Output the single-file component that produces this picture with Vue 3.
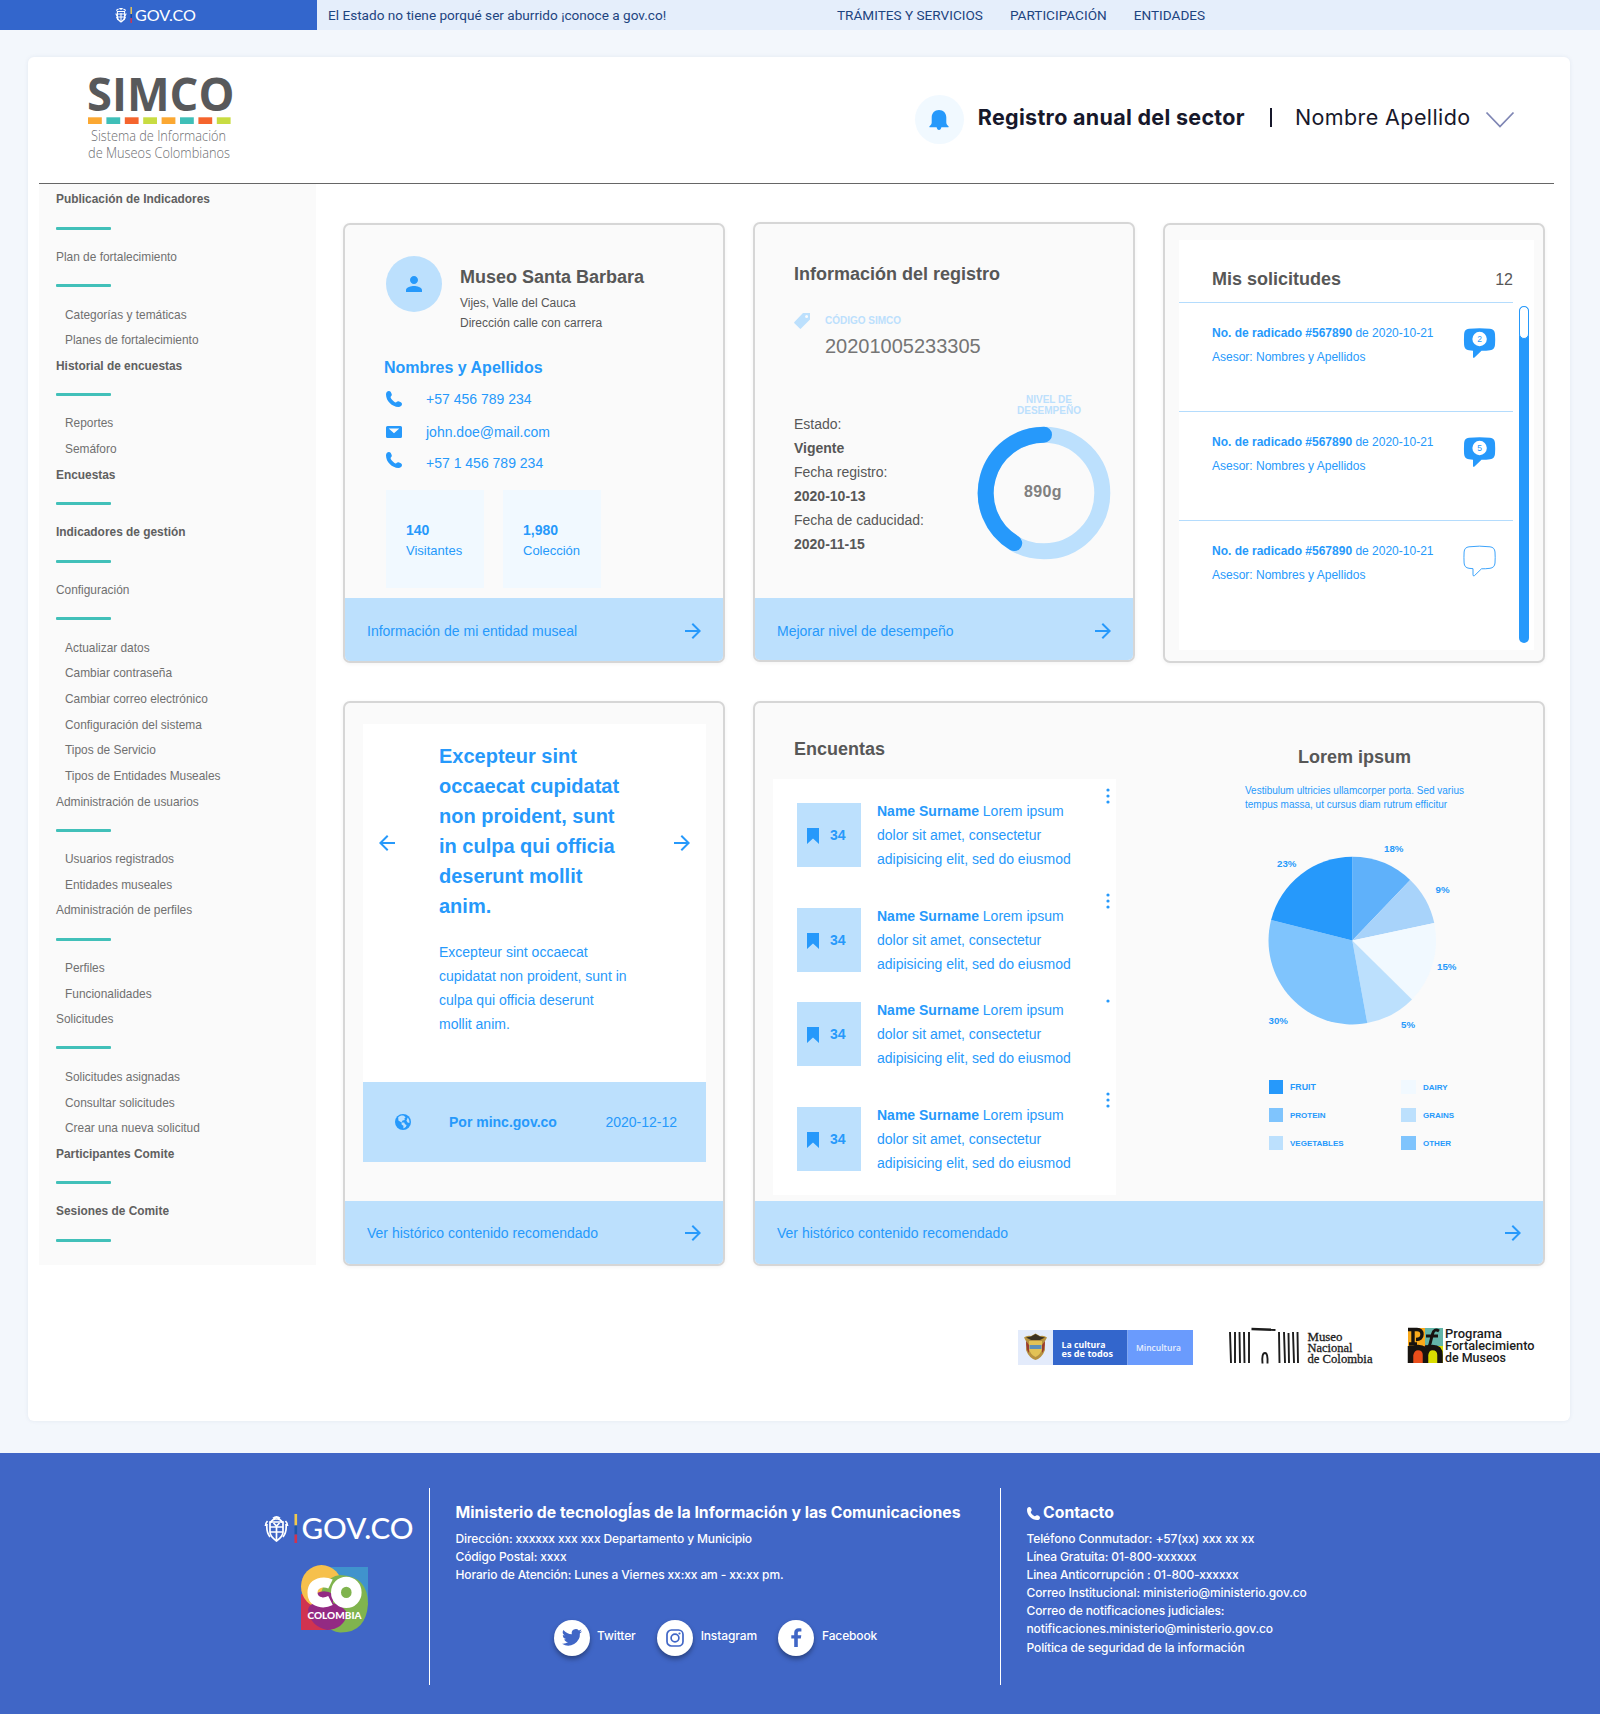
<script setup>
const menu = [
  { t: 'Publicación de Indicadores', bold: true, bar: true },
  { t: 'Plan de fortalecimiento', bar: true },
  { t: 'Categorías y temáticas', sub: true },
  { t: 'Planes de fortalecimiento', sub: true },
  { t: 'Historial de encuestas', bold: true, bar: true },
  { t: 'Reportes', sub: true },
  { t: 'Semáforo', sub: true },
  { t: 'Encuestas', bold: true, bar: true },
  { t: 'Indicadores de gestión', bold: true, bar: true },
  { t: 'Configuración', bar: true },
  { t: 'Actualizar datos', sub: true },
  { t: 'Cambiar contraseña', sub: true },
  { t: 'Cambiar correo electrónico', sub: true },
  { t: 'Configuración del sistema', sub: true },
  { t: 'Tipos de Servicio', sub: true },
  { t: 'Tipos de Entidades Museales', sub: true },
  { t: 'Administración de usuarios', bar: true },
  { t: 'Usuarios registrados', sub: true },
  { t: 'Entidades museales', sub: true },
  { t: 'Administración de perfiles', bar: true },
  { t: 'Perfiles', sub: true },
  { t: 'Funcionalidades', sub: true },
  { t: 'Solicitudes', bar: true },
  { t: 'Solicitudes asignadas', sub: true },
  { t: 'Consultar solicitudes', sub: true },
  { t: 'Crear una nueva solicitud', sub: true },
  { t: 'Participantes Comite', bold: true, bar: true },
  { t: 'Sesiones de Comite', bold: true, bar: true },
]

const requests = [{ count: 2 }, { count: 5 }, { count: 0 }]
const surveys = [{ dots: 3 }, { dots: 3, tight: true }, { dots: 1 }, { dots: 3 }]

const swatches = ['#fba832', '#3fbfb8', '#f5642d', '#c8dc42', '#fba832', '#3fbfb8', '#f5642d', '#c8dc42']

const cx = 112.3
const cy = 110.6
const r = 83.8
const slices = [
  { from: 0, to: 43.7, fill: '#5fb1fa' },
  { from: 43.7, to: 77.9, fill: '#a8d3fa' },
  { from: 77.9, to: 134.6, fill: '#f1f9ff' },
  { from: 134.6, to: 169.7, fill: '#bce0fd' },
  { from: 169.7, to: 284.3, fill: '#7fc4fd' },
  { from: 284.3, to: 360, fill: '#2699fb' },
].map((s) => {
  const pt = (a) => {
    const rad = (a * Math.PI) / 180
    return `${(cx + r * Math.sin(rad)).toFixed(2)} ${(cy - r * Math.cos(rad)).toFixed(2)}`
  }
  return { fill: s.fill, d: `M${cx} ${cy}L${pt(s.from)}A${r} ${r} 0 0 1 ${pt(s.to)}Z` }
})
const pieLabels = [
  { t: '18%', x: 144, y: 22 },
  { t: '23%', x: 37, y: 37 },
  { t: '9%', x: 195.5, y: 63 },
  { t: '15%', x: 197, y: 140 },
  { t: '5%', x: 161, y: 198 },
  { t: '30%', x: 28.5, y: 194 },
]
const legend = [
  { t: 'FRUIT', c: '#2699fb', big: true },
  { t: 'DAIRY', c: '#f1f9ff' },
  { t: 'PROTEIN', c: '#7fc4fd' },
  { t: 'GRAINS', c: '#bce0fd' },
  { t: 'VEGETABLES', c: '#bce0fd' },
  { t: 'OTHER', c: '#7fc4fd' },
]
const phonePath =
  'M0 3.6C0 1.4 1.2 0 2.9 0C4.5 0 5.4 1.8 5.8 3.6C6.1 4.9 4.6 5.3 4.6 6.3C4.8 8 8 11.2 9.7 11.4C10.7 11.4 11.1 9.9 12.4 10.2C14.2 10.6 16 11.5 16 13.1C16 14.8 14.6 16 12.4 16C6 16 0 10 0 3.6Z'
const arrowPath = 'M12 4l-1.41 1.41L16.17 11H4v2h12.17l-5.58 5.59L12 20l8-8z'
</script>

<template>
  <div class="page">
    <div class="topbar">
      <div class="brand">
        <svg width="82" height="20" viewBox="0 0 82 20">
          <g fill="none" stroke="#fff" stroke-width="1.1">
            <path d="M2.4 6.5V12c0 2.6 2 4 3.6 5 1.600-1 3.600-2.400 3.600-5V6.500z" />
            <path d="M1.200 5.500l2.300-1.500M10.800 5.500L8.500 4M.8 8.500l1.500 3M11.200 8.500l-1.500 3M3 9h6M3 12h6M4.300 3.600h3.400M6 3v2M6 8v8M1.500 12l1.500 3M10.500 12L9 15" />
          </g>
          <rect x="15.500" y="2" width="1.400" height="7" fill="#f2c94c" />
          <rect x="15.500" y="9" width="1.400" height="4" fill="#17459e" />
          <rect x="15.500" y="13" width="1.400" height="5" fill="#d8334a" />
          <text x="20" y="15.500" class="gov" font-size="15.500" textLength="61" lengthAdjust="spacingAndGlyphs">GOV.CO</text>
        </svg>
      </div>
      <span class="slogan">El Estado no tiene porqué ser aburrido ¡conoce a gov.co!</span>
      <nav class="topnav">
        <span>TRÁMITES Y SERVICIOS</span>
        <span>PARTICIPACIÓN</span>
        <span>ENTIDADES</span>
      </nav>
    </div>

    <main class="sheet">
      <header class="header">
        <svg class="simco" width="150" height="90" viewBox="0 0 150 90">
          <text x="0" y="37" class="simco-name" textLength="147.500" lengthAdjust="spacingAndGlyphs">SIMCO</text>
          <rect v-for="(c, i) in swatches" :key="i" :x="1 + i * 18.4" y="43.300" width="13.800" height="6.700" :fill="c" />
          <text x="4" y="67" class="tag" textLength="135" lengthAdjust="spacingAndGlyphs">Sistema de Información</text>
          <text x="1" y="84" class="tag" textLength="142" lengthAdjust="spacingAndGlyphs">de Museos Colombianos</text>
        </svg>
        <div class="account">
          <span class="bell">
            <svg width="20" height="20" viewBox="0 0 20 20">
              <path fill="#2699fb" d="M10 0C5.600 0 2.700 3.100 2.700 7.400V12.500C2.700 14.600 1.400 15.200.5 16.200C.2 16.600.4 17.200.9 17.200H7.600C8 18.600 8.600 20 10 20S12 18.600 12.400 17.200H19.100C19.600 17.200 19.800 16.600 19.500 16.200C18.600 15.200 17.300 14.600 17.300 12.500V7.400C17.300 3.100 14.400 0 10 0Z" />
            </svg>
          </span>
          <strong>Registro anual del sector</strong>
          <i class="pipe"></i>
          <span class="user">Nombre Apellido</span>
          <svg class="chevron" width="30" height="18" viewBox="0 0 30 18"><path d="M1.500 1.500L15 15.500L28.500 1.500" fill="none" stroke="#7f86b4" stroke-width="1.800" /></svg>
        </div>
      </header>

      <div class="content">
        <aside class="sidebar">
          <template v-for="m in menu" :key="m.t">
            <div class="item" :class="{ bold: m.bold, sub: m.sub }">{{ m.t }}</div>
            <div v-if="m.bar" class="bar"><i></i></div>
          </template>
        </aside>

        <section class="cards">
          <article class="card">
            <div class="body museum">
              <div class="profile">
                <span class="avatar">
                  <svg width="24" height="24" viewBox="0 0 24 24"><path fill="#2699fb" d="M12 12c2.210 0 4-1.790 4-4s-1.790-4-4-4-4 1.790-4 4 1.790 4 4 4zm0 2c-2.670 0-8 1.340-8 4v2h16v-2c0-2.660-5.330-4-8-4z" /></svg>
                </span>
                <div>
                  <h2>Museo Santa Barbara</h2>
                  <p>Vijes, Valle del Cauca</p>
                  <p>Dirección calle con carrera</p>
                </div>
              </div>
              <h3>Nombres y Apellidos</h3>
              <div class="contact">
                <svg width="16" height="16" viewBox="0 0 16 16"><path :d="phonePath" fill="#2699fb" /></svg>
                <span>+57 456 789 234</span>
              </div>
              <div class="contact mail">
                <svg width="16" height="12" viewBox="0 0 16 12"><path fill="#2699fb" d="M1.500 0h13A1.500 1.500 0 0 1 16 1.500v9a1.500 1.500 0 0 1-1.500 1.500h-13A1.500 1.500 0 0 1 0 10.500v-9A1.500 1.500 0 0 1 1.500 0zM2.700 2.500L8 7.200l5.300-4.700z" /></svg>
                <span>john.doe@mail.com</span>
              </div>
              <div class="contact last">
                <svg width="16" height="16" viewBox="0 0 16 16"><path :d="phonePath" fill="#2699fb" /></svg>
                <span>+57 1 456 789 234</span>
              </div>
              <div class="stats">
                <div><b>140</b><span>Visitantes</span></div>
                <div><b>1,980</b><span>Colección</span></div>
              </div>
            </div>
            <footer class="foot">
              <span>Información de mi entidad museal</span>
              <svg width="24" height="24" viewBox="0 0 24 24"><path :d="arrowPath" fill="#2699fb" /></svg>
            </footer>
          </article>

          <article class="card raised">
            <div class="body register">
              <h2>Información del registro</h2>
              <div class="code">
                <svg width="16" height="16" viewBox="0 0 16 16"><path fill="#bce0fd" fill-rule="evenodd" d="M9 0H16V6.600L7 15.600Q6.400 16.200 5.800 15.600L.4 10.200Q-.2 9.600.4 9ZM12.600 1.900A1.500 1.500 0 1 0 12.600 4.900A1.500 1.500 0 1 0 12.600 1.900Z" /></svg>
                <div>
                  <small>CÓDIGO SIMCO</small>
                  <p>20201005233305</p>
                </div>
              </div>
              <div class="level">
                <dl>
                  <dt>Estado:</dt>
                  <dd>Vigente</dd>
                  <dt>Fecha registro:</dt>
                  <dd>2020-10-13</dd>
                  <dt>Fecha de caducidad:</dt>
                  <dd>2020-11-15</dd>
                </dl>
                <div class="gauge">
                  <small>NIVEL DE<br />DESEMPEÑO</small>
                  <svg width="134" height="134" viewBox="0 0 134 134">
                    <circle cx="67" cy="67" r="58.300" fill="none" stroke="#bce0fd" stroke-width="16" />
                    <path d="M67 8.700A58.300 58.300 0 0 0 37.200 117.100" fill="none" stroke="#2699fb" stroke-width="16" stroke-linecap="round" />
                    <text x="66" y="70.500" text-anchor="middle" font-size="16" font-weight="700" letter-spacing=".4" fill="#808080">890g</text>
                  </svg>
                </div>
              </div>
            </div>
            <footer class="foot">
              <span>Mejorar nivel de desempeño</span>
              <svg width="24" height="24" viewBox="0 0 24 24"><path :d="arrowPath" fill="#2699fb" /></svg>
            </footer>
          </article>

          <article class="card">
            <div class="requests">
              <div class="list">
                <div class="head"><h2>Mis solicitudes</h2><span>12</span></div>
                <div v-for="(q, i) in requests" :key="i" class="request">
                  <div>
                    <p><b>No. de radicado #567890</b> de 2020-10-21</p>
                    <p>Asesor: Nombres y Apellidos</p>
                  </div>
                  <svg width="33" height="33" viewBox="-1 -1 33 33">
                    <path
                      d="M5 .8Q15.500-.5 26 .8Q30.600 1.300 31 6Q31.400 11.500 31 17Q30.600 21.700 26 22.300Q21.500 22.900 17.500 22.800L10.500 29.600Q9 30.600 9 28.800V22.700L5 22.300Q.4 21.700.1 17Q-.2 11.500.1 6Q.4 1.300 5 .8Z"
                      :fill="q.count ? '#2699fb' : '#fff'"
                      stroke="#2699fb"
                      :stroke-width="q.count ? 0 : 0.9"
                    />
                    <template v-if="q.count">
                      <circle cx="15.600" cy="11" r="7.200" fill="#fff" />
                      <text x="15.600" y="14" text-anchor="middle" font-size="8.500" fill="#2699fb">{{ q.count }}</text>
                    </template>
                  </svg>
                </div>
              </div>
              <div class="scroll"><i></i></div>
            </div>
          </article>

          <article class="card tall">
            <div class="body news">
              <div class="slide">
                <svg width="24" height="24" viewBox="0 0 24 24"><path d="M20 11H7.830l5.590-5.590L12 4l-8 8 8 8 1.410-1.410L7.830 13H20v-2z" fill="#2699fb" /></svg>
                <div class="copy">
                  <h2>Excepteur sint occaecat cupidatat non proident, sunt in culpa qui officia deserunt mollit anim.</h2>
                  <p>Excepteur sint occaecat cupidatat non proident, sunt in culpa qui officia deserunt mollit anim.</p>
                </div>
                <svg width="24" height="24" viewBox="0 0 24 24"><path :d="arrowPath" fill="#2699fb" /></svg>
              </div>
              <div class="source">
                <svg width="16" height="16" viewBox="0 0 16 16">
                  <circle cx="8" cy="8" r="8" fill="#2699fb" />
                  <path fill="#bce0fd" d="M3.200 3.200C4.500 2 6.500 1.300 8.800 1.700L10.600 3.200L9.400 4.600L9.800 6L7.600 6.600L6.400 8.400H9.200L10 10.200L11.600 11L10.800 13L8.400 14.500V11.800L6.600 10.400V8.600L3.400 6.400ZM12.600 3.400C14.200 5 14.700 7 14.400 9L12.600 8.600L11.400 6.600L12.200 5Z" />
                </svg>
                <b>Por minc.gov.co</b>
                <span>2020-12-12</span>
              </div>
            </div>
            <footer class="foot">
              <span>Ver histórico contenido recomendado</span>
              <svg width="24" height="24" viewBox="0 0 24 24"><path :d="arrowPath" fill="#2699fb" /></svg>
            </footer>
          </article>

          <article class="card tall wide">
            <div class="body split">
              <div class="surveys">
                <h2>Encuentas</h2>
                <div class="panel">
                  <div v-for="(s, i) in surveys" :key="i" class="survey" :class="{ tight: s.tight }">
                    <div class="badge">
                      <svg width="12" height="16" viewBox="0 0 12 16"><path d="M0 0H12V16L6 10.600L0 16Z" fill="#2699fb" /></svg>
                      <b>34</b>
                    </div>
                    <p><b>Name Surname</b> Lorem ipsum dolor sit amet, consectetur adipisicing elit, sed do eiusmod</p>
                    <svg class="dots" :class="{ single: s.dots === 1 }" width="4" height="16" viewBox="0 0 4 16">
                      <circle v-for="n in s.dots" :key="n" cx="2" :cy="2 + (n - 1) * 6" r="1.600" fill="#2699fb" />
                    </svg>
                  </div>
                </div>
              </div>
              <div class="chart">
                <h2>Lorem ipsum</h2>
                <p>Vestibulum ultricies ullamcorper porta. Sed varius tempus massa, ut cursus diam rutrum efficitur</p>
                <svg width="240" height="220" viewBox="0 0 240 220">
                  <path v-for="s in slices" :key="s.d" :d="s.d" :fill="s.fill" />
                  <text v-for="l in pieLabels" :key="l.t" :x="l.x" :y="l.y" font-size="9.700" font-weight="700" fill="#2699fb">{{ l.t }}</text>
                </svg>
                <ul>
                  <li v-for="l in legend" :key="l.t" :class="{ big: l.big }"><i :style="{ background: l.c }"></i>{{ l.t }}</li>
                </ul>
              </div>
            </div>
            <footer class="foot">
              <span>Ver histórico contenido recomendado</span>
              <svg width="24" height="24" viewBox="0 0 24 24"><path :d="arrowPath" fill="#2699fb" /></svg>
            </footer>
          </article>
        </section>
      </div>

      <div class="partners">
        <svg width="176" height="40" viewBox="0 0 176 40">
          <rect x="0" y="3" width="35" height="35" fill="#e3ebfb" />
          <rect x="35" y="3" width="74.500" height="35" fill="#3366cc" />
          <rect x="109.500" y="3" width="65.500" height="35" fill="#6a9bfd" />
          <path d="M6 10.500q3-2.500 7-1.500l4.500-2.500 4.500 2.500q4-1 7 1.500l-2.500 4.500.5 8q-3 8-9.500 10-6.500-2-9.500-10l.5-8z" fill="#b79240" />
          <path d="M11 14h13v8q-1 5-6.500 8-5.500-3-6.500-8z" fill="#e2c256" />
          <path d="M11.500 18h12v4h-12z" fill="#5d8fb8" />
          <path d="M8 14l3 4v8q-3-3-3-12zM27 14l-3 4v8q3-3 3-12z" fill="#9b3b2e" />
          <path d="M8 10.500l5-1 4.500-2.500 4.500 2.500 5 1-5 2.500h-9z" fill="#3b3224" />
          <text x="43.500" y="20.500" class="nun" font-weight="700" textLength="44" lengthAdjust="spacingAndGlyphs">La cultura</text>
          <text x="43.500" y="29.500" class="nun" font-weight="700" textLength="51.500" lengthAdjust="spacingAndGlyphs">es de todos</text>
          <text x="118" y="23.500" class="nun" font-weight="600" textLength="45" lengthAdjust="spacingAndGlyphs" opacity=".85">Mincultura</text>
        </svg>
        <svg width="146" height="40" viewBox="0 0 146 40">
          <g stroke="#1c1c1c" fill="none" stroke-width="1.900">
            <path d="M1 5l1 31M6 5v31M10.500 5l.5 31M15 5l.5 31M20 5v31M50 5l.5 31M55 5l1 31M59.500 6l.5 30M64 5l1 31M68.500 5l.5 31" />
            <path d="M22.500 2l24 .8" stroke-width="2.400" />
            <path d="M33.500 36.500Q32.500 26 36 26Q39 26 38.500 36.500" />
          </g>
          <g class="mnc">
            <text x="78.500" y="14" textLength="35" lengthAdjust="spacingAndGlyphs">Museo</text>
            <text x="78.500" y="25" textLength="45" lengthAdjust="spacingAndGlyphs">Nacional</text>
            <text x="78.500" y="36" textLength="65" lengthAdjust="spacingAndGlyphs">de Colombia</text>
          </g>
        </svg>
        <svg width="130" height="40" viewBox="0 0 130 40">
          <rect x="0" y="1" width="17" height="18" fill="#f9a91b" />
          <rect x="17" y="1" width="18" height="18" fill="#63b5a8" />
          <rect x="0" y="19" width="17" height="17" fill="#e94e1b" />
          <rect x="17" y="19" width="18" height="17" fill="#d9dc00" />
          <g fill="none" stroke="#17130f">
            <path d="M0 2.500H9Q14 2.500 14 7.500Q14 12.500 8 12.500M5 2V17M1 17H9" stroke-width="3.400" />
            <path d="M31 4Q26 1 24.500 7L22 17Q21 21 17 19M18 9H30" stroke-width="3" />
            <path d="M2.500 36V19M2.500 28Q4 20.500 10 20.500Q17.500 20.500 17.500 28V36M17.500 28Q18.500 20.500 24.500 20.500Q32 20.500 32 28V36" stroke-width="5.500" />
          </g>
          <g class="pfm">
            <text x="37" y="11" textLength="57" lengthAdjust="spacingAndGlyphs">Programa</text>
            <text x="37" y="22.500" textLength="89.500" lengthAdjust="spacingAndGlyphs">Fortalecimiento</text>
            <text x="37" y="35" textLength="61" lengthAdjust="spacingAndGlyphs">de Museos</text>
          </g>
        </svg>
      </div>
    </main>

    <footer class="footer">
      <div class="logos">
        <svg width="150" height="32" viewBox="0 0 150 32">
          <g fill="none" stroke="#fff" stroke-width="1.700">
            <path d="M6 9v10c0 4 3 6.500 6.500 9 3.500-2.500 6.500-5 6.500-9V9z" />
            <path d="M6.500 9.500Q9.500 5 12.500 6Q15.500 5 18.500 9.500M6 14h13M6 19h13M12.500 14v13M9 5.500Q12.500 2.500 16 5.500M3.500 8q-2 2-2 5M21.500 8q2 2 2 5M3 11q-1 8 3 13M22 11q1 8-3 13M9.500 10l3 3 3-3" />
          </g>
          <rect x="30.500" y="1" width="2.600" height="11.500" fill="#f2c94c" />
          <rect x="30.500" y="12.500" width="2.600" height="9" fill="#1f57a8" />
          <rect x="30.500" y="21.500" width="2.600" height="8.500" fill="#cf3350" />
          <text x="37.500" y="25.500" class="gov" font-size="29" textLength="112" lengthAdjust="spacingAndGlyphs">GOV.CO</text>
        </svg>
        <svg class="co" width="70" height="70" viewBox="0 0 70 70">
          <path d="M22 3H68V38H22Z" fill="#4093cd" />
          <path d="M1 30H30V66H1Z" fill="#d03350" />
          <ellipse cx="21.500" cy="22.500" rx="20.500" ry="21.500" fill="#f6c04c" />
          <path d="M40 11Q68 12 68 40Q66 69 40 68.500Q22 67 20 40Q20 14 40 11Z" fill="#80b44e" />
          <path d="M8 46Q9 38 24 37Q44 40 47 50Q44 65 27 66Q10 62 8 46Z" fill="#932a83" />
          <path d="M17 29Q25 25 33 30V40H17Z" fill="#932a83" />
          <path d="M30.500 20Q26 17.800 21.500 18.600Q12.500 20.500 12.500 28.500Q12.500 37 21.500 38.300Q26 38.800 30.500 36.500" fill="none" stroke="#fff" stroke-width="10" />
          <ellipse cx="46.300" cy="28.400" rx="10.300" ry="10.700" fill="none" stroke="#fff" stroke-width="10" />
          <text x="7.500" y="55" class="marca" textLength="54" lengthAdjust="spacingAndGlyphs">COLOMBIA</text>
        </svg>
      </div>
      <div class="ministry">
        <h4>Ministerio de tecnologÍas de la Información y las Comunicaciones</h4>
        <p>Dirección: xxxxxx xxx xxx Departamento y Municipio</p>
        <p>Código Postal: xxxx</p>
        <p>Horario de Atención: Lunes a Viernes xx:xx am - xx:xx pm.</p>
        <div class="social">
          <span><i><svg width="20" height="17" viewBox="0 0 24 20"><path fill="#4066c6" d="M24 2.400a9.800 9.800 0 0 1-2.800.8A4.900 4.900 0 0 0 23.300.4a9.800 9.800 0 0 1-3.100 1.200 4.900 4.900 0 0 0-8.400 4.500A14 14 0 0 1 1.700 1a4.900 4.900 0 0 0 1.500 6.600 4.900 4.900 0 0 1-2.200-.6 4.900 4.900 0 0 0 3.900 4.900 4.900 4.900 0 0 1-2.200.1 4.900 4.900 0 0 0 4.600 3.400A9.900 9.900 0 0 1 0 17.500 14 14 0 0 0 21.500 5a10 10 0 0 0 2.500-2.600z" /></svg></i><em>Twitter</em></span>
          <span><i><svg width="18" height="18" viewBox="0 0 18 18"><g fill="none" stroke="#4066c6" stroke-width="1.700"><rect x="1" y="1" width="16" height="16" rx="4.500" /><circle cx="9" cy="9" r="3.900" /></g><circle cx="13.500" cy="4.500" r="1.100" fill="#4066c6" /></svg></i><em>Instagram</em></span>
          <span><i><svg width="11" height="19" viewBox="0 0 11 19"><path fill="#4066c6" d="M3.200 19V10.500H.3V7.200H3.200V4.700C3.200 1.700 5 .2 7.600.2 8.900.2 10 .3 10.400.4V3.400H8.500C7.100 3.400 6.800 4.100 6.800 5.100V7.200H10.300L9.800 10.500H6.800V19Z" /></svg></i><em>Facebook</em></span>
        </div>
      </div>
      <div class="help">
        <h4><svg width="13" height="13" viewBox="0 0 16 16"><path :d="phonePath" fill="#fff" /></svg>Contacto</h4>
        <p>Teléfono Conmutador: +57(xx) xxx xx xx</p>
        <p>Línea Gratuita: 01-800-xxxxxx</p>
        <p>Linea Anticorrupción : 01-800-xxxxxx</p>
        <p>Correo Institucional: ministerio@ministerio.gov.co</p>
        <p>Correo de notificaciones judiciales:</p>
        <p>notificaciones.ministerio@ministerio.gov.co</p>
        <p>Política de seguridad de la información</p>
      </div>
    </footer>
  </div>
</template>

<style>
body {
  margin: 0;
  background: #f3f7fc;
}
</style>

<style scoped>
.page {
  width: 1600px;
  height: 1714px;
  display: flex;
  flex-direction: column;
  background: #f3f7fc;
  font-family: 'Liberation Sans', Arial, sans-serif;
  color: #2699fb;
  overflow: hidden;
}
h2, h3, h4, p, dl, dd, ul { margin: 0; padding: 0; }
svg { display: block; flex: none; overflow: visible; }
svg .gov { font-family: Lato, sans-serif; fill: #fff; }
svg .simco-name { font-family: 'Open Sans', 'Noto Sans', sans-serif; font-weight: 700; font-size: 47px; fill: #58595b; }
svg .tag { font-family: 'Open Sans', 'Noto Sans', sans-serif; font-weight: 300; font-size: 14px; fill: #6d6e71; }
svg .nun { font-family: 'Open Sans', sans-serif; font-size: 9px; fill: #fff; }
svg .mnc { font-family: 'Liberation Serif', serif; font-size: 12.500px; fill: #1c1c1c; stroke: #1c1c1c; stroke-width: 0.3px; }
svg .pfm { font-family: Roboto, sans-serif; font-weight: 500; font-size: 13px; fill: #1c1c1c; }
svg .marca { font-family: Lato, sans-serif; font-weight: 900; font-size: 9.500px; fill: #fff; }

.topbar {
  height: 30px;
  flex: none;
  display: flex;
  align-items: center;
  background: #e5eefb;
  font: 400 13.600px/30px Roboto, sans-serif;
  color: #1d4480;
}
.brand {
  width: 317px;
  height: 30px;
  box-sizing: border-box;
  padding: 5px 0 0 115px;
  background: #3366cc;
}
.slogan { width: 498px; padding-left: 11px; margin-right: 11px; white-space: nowrap; box-sizing: border-box; }
.topnav { display: flex; gap: 27px; margin-left: 11px; }

.sheet {
  width: 1542px;
  height: 1364px;
  flex: none;
  box-sizing: border-box;
  margin: 27px 0 0 28px;
  padding: 0 16px 0 11px;
  background: #fff;
  border-radius: 6px;
  box-shadow: 0 0 4px rgba(40, 70, 120, 0.08);
}
.header {
  height: 127px;
  box-sizing: border-box;
  display: flex;
  justify-content: space-between;
  border-bottom: 1px solid #666;
}
.simco { margin: 17px 0 0 48px; }
.account {
  display: flex;
  align-items: center;
  height: 49px;
  margin: 38px 39px 0 0;
  font: 400 21.500px/30px Inter, sans-serif;
  color: #17182b;
}
.bell {
  width: 49px;
  height: 49px;
  border-radius: 50%;
  background: #f1f9ff;
  display: flex;
  align-items: center;
  justify-content: center;
  margin-right: 14px;
}
.account strong, .user { margin-top: -6px; }
.account strong { letter-spacing: 0.300px; }
.user { letter-spacing: 0.400px; }
.chevron { margin-left: 14.500px; }
.pipe { width: 2px; height: 19px; margin: -5px 23px 0 25px; background: #17182b; }

.content { display: flex; }
.sidebar {
  width: 277px;
  height: 1081px;
  box-sizing: border-box;
  padding: 3.400px 0 0 17px;
  background: #fafafa;
  color: #707070;
  font-size: 11.900px;
  line-height: 25.670px;
}
.item { height: 25.670px; }
.item.bold { font-weight: 700; color: #606060; }
.item.sub { padding-left: 9px; }
.bar { height: 31.950px; display: flex; align-items: center; }
.bar i { width: 55px; height: 3px; margin-top: -2px; border-radius: 1px; background: #41c0b9; }

.cards {
  display: grid;
  grid-template-columns: 382px 382px 382px;
  grid-template-rows: 440px 565px;
  column-gap: 28px;
  row-gap: 38px;
  margin: 39px 0 0 27px;
}
.card {
  box-sizing: border-box;
  display: flex;
  flex-direction: column;
  border: 2px solid #d6d6d6;
  border-radius: 7px;
  background: #fafafa;
  box-shadow: 0 1px 4px rgba(0, 0, 0, 0.05);
  overflow: hidden;
}
.raised { margin: -1px 0 1px; }
.raised .body { flex: none; height: 374px; }
.wide { grid-column: span 2; }
.body { height: 373px; flex: none; box-sizing: border-box; }
.tall .body { height: 498px; }
.foot {
  flex: 1;
  display: flex;
  align-items: center;
  justify-content: space-between;
  padding: 2px 18px 0 22px;
  background: #bce0fd;
  font-size: 14px;
}
.raised .foot { padding-top: 3px; }
.tall .foot { padding-top: 1px; }
h2 { font-size: 18px; line-height: 20px; color: #575757; }

.museum { padding: 31px 0 0 41px; }
.profile { display: flex; gap: 18px; color: #575757; }
.avatar {
  width: 56px;
  height: 56px;
  border-radius: 50%;
  background: #bce0fd;
  display: flex;
  align-items: center;
  justify-content: center;
}
.profile h2 { margin: 11px 0 6px; }
.profile p { font-size: 12px; line-height: 20px; }
h3 { font-size: 16px; line-height: 20px; margin: 25px 0 11px -2px; }
.contact { display: flex; align-items: center; gap: 24px; height: 20px; font-size: 14px; margin-bottom: 13px; }
.contact.mail { margin-bottom: 11px; }
.contact.last { margin-bottom: 17px; }
.contact.last svg { margin-top: -6px; }
.stats { display: flex; gap: 19px; }
.stats div {
  width: 98px;
  height: 98px;
  box-sizing: border-box;
  padding: 30px 0 0 20px;
  background: #f1f9ff;
  line-height: 20px;
}
.stats b { display: block; font-size: 14px; }
.stats span { font-size: 13px; }

.register { padding: 40px 0 0 39px; }
.code { display: flex; gap: 15px; margin-top: 29px; }
.code small, .gauge small { display: block; font-size: 10px; line-height: 11px; font-weight: 700; color: #bce0fd; }
.code small { margin-top: 2px; }
.code p { margin-top: 8px; font-size: 20px; line-height: 24px; color: #757575; }
.level { display: flex; margin-top: 36px; }
dl { width: 182px; padding-top: 18px; font-size: 14px; line-height: 24px; color: #575757; }
dd { font-weight: 700; }
.gauge small { width: 134px; text-align: center; padding-left: 6px; }
.gauge svg { margin-left: 0.500px; margin-top: 10px; }

.requests { display: flex; width: 355px; height: 410px; margin: 15px 0 0 14px; background: #fff; }
.list { width: 334px; }
.head { height: 62px; box-sizing: border-box; padding: 29px 0 0 33px; display: flex; justify-content: space-between; }
.head span { font-size: 16px; line-height: 20px; margin-top: 1px; color: #575757; }
.request {
  height: 109px;
  box-sizing: border-box;
  border-top: 1px solid #b4dcfd;
  padding: 18px 17px 0 33px;
  display: flex;
  justify-content: space-between;
  font-size: 12px;
  line-height: 24px;
}
.request svg { margin-top: 6px; }
.scroll { width: 10px; height: 337px; margin: 66px 0 0 6px; border-radius: 5px; background: #2699fb; }
.scroll i { display: block; height: 33px; box-sizing: border-box; border: 1px solid #2699fb; border-radius: 5px; background: #fff; }

.news { padding: 21px 0 0 18px; }
.slide { width: 343px; height: 358px; box-sizing: border-box; padding: 17px 12px 0; display: flex; background: #fff; }
.slide > svg { margin-top: 89.500px; }
.copy { width: 190px; margin: 0 41px 0 40px; }
.copy h2 { font-size: 20px; line-height: 30px; color: #2699fb; }
.copy p { margin-top: 19px; font-size: 14px; line-height: 24px; }
.source { width: 343px; height: 80px; box-sizing: border-box; padding: 0 29px 0 32px; display: flex; align-items: center; background: #bce0fd; font-size: 14px; }
.source b { margin: 0 auto 0 38px; }

.split { display: flex; }
.surveys { width: 343px; padding: 36px 0 0 18px; }
.surveys h2 { margin: 0 0 20px 21px; }
.panel { width: 343px; height: 416px; box-sizing: border-box; padding: 24px 0 0 24px; background: #fff; }
.survey { display: flex; height: 64px; margin-bottom: 41px; font-size: 14px; line-height: 24px; }
.survey.tight { margin-bottom: 30px; }
.badge { width: 64px; height: 64px; box-sizing: border-box; padding-left: 10px; display: flex; align-items: center; gap: 11px; background: #bce0fd; }
.badge svg { margin-top: 1px; }
.survey p { width: 200px; margin: -4px 0 0 16px; }
.dots { margin: -15.500px 0 0 28.500px; }
.dots.single { margin-top: -3.500px; }
.chart { margin-left: 124px; padding-top: 44px; width: 260px; }
.chart h2 { text-align: center; width: 229px; }
.chart p { width: 225px; margin: 17px 0 0 5px; font-size: 10px; line-height: 14px; }
.chart svg { margin-top: 18px; }
.chart ul { list-style: none; margin: 30px 0 0 29px; display: grid; grid-template-columns: 132px 90px; row-gap: 14px; }
.chart li { display: flex; align-items: center; gap: 7px; height: 14px; font-size: 8px; font-weight: 700; }
.chart li.big { font-size: 8.800px; }
.chart li i { width: 14px; height: 14px; }
.chart li:nth-child(even) i { width: 15px; }

.partners { display: flex; margin: 61px 0 0 979px; }
.partners svg + svg { margin-left: 35px; }
.partners svg + svg + svg { margin-left: 33px; }

.footer {
  flex: 1;
  margin-top: 32px;
  display: flex;
  background: #4066c6;
  color: #fff;
  font: 500 12px/18.100px Inter, sans-serif;
  letter-spacing: -0.120px;
}
.logos { width: 165px; margin-left: 264px; padding-top: 60px; letter-spacing: 0; }
.co { margin: 18.500px 0 0 35.500px; }
.ministry, .help { height: 197px; margin-top: 35px; border-left: 1.500px solid #fff; }
.ministry { width: 545px; padding-left: 25.500px; box-sizing: content-box; margin-right: -0.500px; }
.help { padding-left: 25.500px; }
.footer h4 { display: flex; align-items: center; gap: 3.500px; margin: 15px 0 7px; font-size: 15.820px; line-height: 20px; font-weight: 700; letter-spacing: 0; white-space: nowrap; }
.social { display: flex; margin: 35.500px 0 0 98px; }
.social span { display: flex; align-items: center; gap: 7.500px; margin-right: 21.500px; }
.social em { font-style: normal; margin-top: -4px; }
.social i { width: 36px; height: 36px; border-radius: 50%; background: #fff; display: flex; align-items: center; justify-content: center; box-shadow: 0 3px 5px rgba(0, 0, 0, 0.35); }
</style>
